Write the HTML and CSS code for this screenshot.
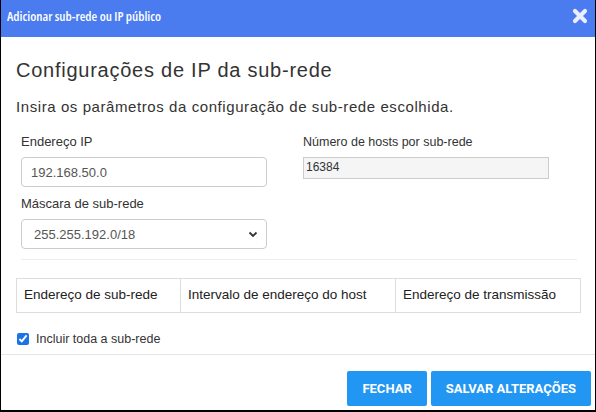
FILE: index.html
```html
<!DOCTYPE html>
<html lang="pt">
<head>
<meta charset="utf-8">
<title>Adicionar sub-rede ou IP público</title>
<link rel="stylesheet" href="styles.css">
</head>
<body>
<div class="modal">
  <div class="modal-header">
    <span class="modal-title">Adicionar sub-rede ou IP público</span>
    <svg class="close" width="16" height="16" viewBox="0 0 16 16" aria-label="Fechar">
      <path d="M3 3 L13 13 M13 3 L3 13" stroke="#e9effd" stroke-width="4.2" stroke-linecap="round" fill="none"/>
    </svg>
  </div>
  <div class="modal-body">
    <h2 class="heading">Configurações de IP da sub-rede</h2>
    <p class="subtitle">Insira os parâmetros da configuração de sub-rede escolhida.</p>
    <div class="form-row">
      <div class="col">
        <label class="label">Endereço IP</label>
        <input class="input" type="text" value="192.168.50.0">
        <label class="label">Máscara de sub-rede</label>
        <div class="select-wrap">
          <select class="select">
            <option>255.255.192.0/18</option>
          </select>
          <svg class="chevron" width="10" height="7" viewBox="0 0 10 7">
            <path d="M1.5 1.5 L5 5 L8.5 1.5" stroke="#333" stroke-width="1.8" fill="none"/>
          </svg>
        </div>
      </div>
      <div class="col">
        <label class="label label-sm">Número de hosts por sub-rede</label>
        <input class="input-ro" type="text" value="16384" readonly>
      </div>
    </div>
    <div class="rule"></div>
    <table class="table">
      <thead>
        <tr>
          <th class="c1">Endereço de sub-rede</th>
          <th class="c2">Intervalo de endereço do host</th>
          <th class="c3">Endereço de transmissão</th>
        </tr>
      </thead>
    </table>
    <label class="check">
      <input type="checkbox" class="checkbox" checked>
      <span>Incluir toda a sub-rede</span>
    </label>
  </div>
  <div class="modal-footer">
    <button class="btn">FECHAR</button>
    <button class="btn">SALVAR ALTERAÇÕES</button>
  </div>
</div>
</body>
</html>
```
FILE: styles.css
```css
* { box-sizing: border-box; }
html, body { margin: 0; padding: 0; background: #fff; }
body { font-family: "Liberation Sans", Arial, sans-serif; color: #333; }

.modal {
  width: 596px;
  height: 412px;
  border-left: 1px solid #000;
  border-right: 1px solid #000;
  border-bottom: 2px solid #000;
  display: flex;
  flex-direction: column;
  background: #fff;
}

.modal-header {
  height: 37px;
  flex: none;
  background: #4a7cf0;
  display: flex;
  align-items: center;
  justify-content: space-between;
  padding: 0 7px 5px 6px;
}
.modal-title {
  color: #fff;
  font-family: "Open Sans", "Liberation Sans", sans-serif;
  font-stretch: 75%;
  font-weight: 600;
  font-size: 13px;
  line-height: 16px;
}
.close { display: block; }

.modal-body {
  padding: 0 15px 7px 15px;
  flex: none;
}
.heading {
  margin: 21px 0 0 0;
  font-size: 20px;
  line-height: 24px;
  font-weight: normal;
  letter-spacing: 0.75px;
  color: #333;
}
.subtitle {
  margin: 16px 0 0 0;
  font-size: 15px;
  line-height: 18px;
  letter-spacing: 0.58px;
  color: #333;
}

.form-row {
  display: flex;
  gap: 36px;
  margin-top: 18px;
  padding-left: 5px;
}
.col {
  width: 246px;
  display: flex;
  flex-direction: column;
}
.label {
  display: block;
  font-size: 13px;
  line-height: 16px;
  margin-bottom: 7px;
  color: #333;
}
.label-sm { font-size: 12.5px; }

.input {
  height: 30px;
  border: 1px solid #ccc;
  border-radius: 4px;
  padding: 0 9px;
  font-family: "Liberation Sans", Arial, sans-serif;
  font-size: 13px;
  color: #555;
  margin: 0 0 9px 0;
  outline: none;
}
.select-wrap { position: relative; height: 30px; }
.select {
  width: 100%;
  height: 30px;
  border: 1px solid #ccc;
  border-radius: 4px;
  padding: 0 12px;
  font-family: "Liberation Sans", Arial, sans-serif;
  font-size: 13px;
  color: #555;
  background: #fff;
  appearance: none;
  -webkit-appearance: none;
  outline: none;
}
.chevron {
  position: absolute;
  right: 9px;
  top: 12px;
  pointer-events: none;
}

.input-ro {
  height: 22px;
  border: 1px solid #ccc;
  border-radius: 0;
  background: #f5f5f5;
  padding: 0 2px 2px 2px;
  font-family: "Liberation Sans", Arial, sans-serif;
  font-size: 12px;
  color: #333;
  margin: 0;
  outline: none;
}

.rule {
  height: 1px;
  background: #eee;
  margin: 10px 3px 0 5px;
}

.table {
  margin-top: 18px;
  width: 564px;
  border-collapse: collapse;
  table-layout: fixed;
}
.table th {
  height: 34px;
  border: 1px solid #ddd;
  padding: 0 6px 2px 7px;
  text-align: left;
  font-size: 13.5px;
  font-weight: normal;
  color: #222;
  white-space: nowrap;
}
.c1 { width: 164px; }
.c2 { width: 215px; }
.c3 { width: 185px; }

.check {
  display: flex;
  align-items: center;
  margin-top: 18px;
  font-size: 12.5px;
  line-height: 16px;
  color: #333;
}
.checkbox {
  width: 12px;
  height: 12px;
  margin: 0 7px 0 1px;
  accent-color: #1a73e8;
}

.modal-footer {
  border-top: 1px solid #e5e5e5;
  margin-top: auto;
  flex: 1;
  display: flex;
  justify-content: flex-end;
  align-items: flex-start;
  gap: 4px;
  padding: 16px 4px 0 0;
}
.btn {
  height: 35px;
  border: none;
  border-radius: 2px;
  background: #2196f3;
  color: #fff;
  font-family: Roboto, "Liberation Sans", sans-serif;
  font-weight: bold;
  font-size: 13px;
  padding: 0 15px;
  cursor: pointer;
}
```
